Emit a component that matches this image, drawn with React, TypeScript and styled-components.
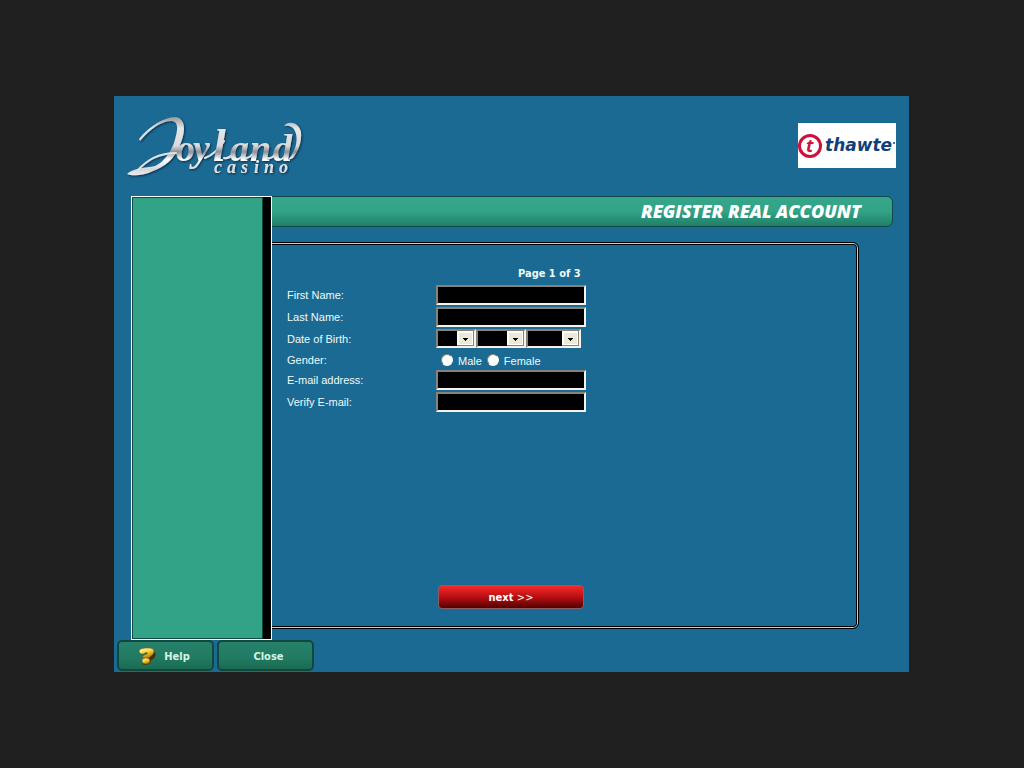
import React from "react";
import styled, { createGlobalStyle } from "styled-components";

const Global = createGlobalStyle`
  * { box-sizing: border-box; }
  body {
    margin: 0;
    background: #202020;
    color: #eefafa;
    font-family: "Liberation Sans", sans-serif;
    font-size: 11px;
    line-height: 14px;
  }
`;

const Page = styled.div`
  min-height: 100vh;
  padding: 96px 115px 96px 114px;
`;

const Frame = styled.main`
  display: flex;
  flex-direction: column;
  min-height: 576px;
  background: #1b6a94;
`;

const Header = styled.header`
  display: flex;
  justify-content: space-between;
  align-items: flex-start;
  height: 100px;
  padding: 16px 13px 0 10px;
`;

const Seal = styled.svg`
  margin-top: 11px;
  background: #fff;
`;

const Body = styled.div`
  display: flex;
  flex: 1;
  padding: 0 16px 0 17px;
`;

const Sidebar = styled.aside`
  position: relative;
  z-index: 1;
  display: flex;
  flex: 0 0 141px;
  border: 1px solid #fff;
  background: #000;
  padding-right: 8px;

  &::before {
    content: "";
    flex: 1;
    border: 1px solid #14493f;
    background: #32a387;
  }
`;

const Content = styled.section`
  display: flex;
  flex-direction: column;
  flex: 1;
  margin-left: -6px;
`;

const TitleBar = styled.h1`
  height: 31px;
  margin: 0 0 15px;
  padding-right: 31px;
  border: 1px solid #12484c;
  border-radius: 6px;
  background: linear-gradient(#35a689 0, #32a387 50%, #1f7f66 100%);
  color: #fff;
  font: italic 800 18px/29px "Open Sans", sans-serif;
  text-align: right;
`;

const Panel = styled.form`
  display: flex;
  flex-direction: column;
  flex: 1;
  margin: 0 34px 11px 0;
  padding: 24px 20px 19px;
  border: 1px solid #000;
  border-radius: 6px;
  box-shadow: inset 0 0 0 1px #a9dcec, inset 0 0 0 2px #000;
`;

const Step = styled.h2`
  margin: 0 0 3px 231px;
  font: bold 11px/14px "DejaVu Sans Condensed", "DejaVu Sans", sans-serif;
`;

const Row = styled.div<{ $tight?: boolean }>`
  display: grid;
  grid-template-columns: 149px 1fr;
  align-items: center;
  height: ${(p) => (p.$tight ? 19 : 22)}px;
`;

const bevel = `
  border: 2px solid;
  border-color: #85837c #f4f4ec #f4f4ec #85837c;
  border-radius: 0;
  outline: none;
  background: #000;
  color: #fff;
  font: inherit;
`;

const TextBox = styled.input`
  ${bevel}
  width: 150px;
  height: 20px;
  padding: 0 3px;
`;

const Group = styled.div`
  display: flex;
  align-items: center;
`;

const SelectBox = styled.span<{ $width: number }>`
  position: relative;
  width: ${(p) => p.$width}px;
  height: 19px;
  margin-bottom: 1px;
`;

const Select = styled.select`
  ${bevel}
  display: block;
  appearance: none;
  width: 100%;
  height: 100%;
`;

const Arrow = styled.svg`
  position: absolute;
  top: 2px;
  right: 2px;
  pointer-events: none;
`;

const Option = styled.label`
  display: flex;
  align-items: center;
  gap: 5px;
  margin-left: 5px;

  span {
    padding-top: 3px;
  }
`;

const Radio = styled.input`
  appearance: none;
  width: 12px;
  height: 12px;
  margin: 0;
  border: 1px solid;
  border-color: #85837c #f4f4ec #f4f4ec #85837c;
  border-radius: 50%;
  background: #fff;

  &:checked {
    background: radial-gradient(#000 2px, #fff 3px);
  }
`;

const Next = styled.button`
  width: 146px;
  height: 24px;
  margin: auto 0 0 151px;
  padding: 2px 0 0;
  border: 1px solid #8b5d6b;
  border-radius: 4px;
  background: linear-gradient(#f52a2a, #b90f12 50%, #540000);
  color: #fff;
  font: bold 11px/20px "DejaVu Sans Condensed", "DejaVu Sans", sans-serif;

  span {
    font-weight: normal;
  }
`;

const Footer = styled.footer`
  display: flex;
  gap: 3px;
  height: 32px;
  padding: 0 3px 1px;
`;

const FootButton = styled.button`
  display: flex;
  align-items: center;
  justify-content: center;
  gap: 8px;
  width: 97px;
  padding: 3px 3px 0 0;
  border: 2px solid #10483f;
  border-radius: 5px;
  background: linear-gradient(#27806a, #217a61 60%, #1b6b53);
  color: #d3f5e6;
  font: bold 11px/14px "DejaVu Sans Condensed", "DejaVu Sans", sans-serif;
`;

const CloseButton = styled(FootButton)`
  padding: 3px 0 0 6px;
`;

function JoylandLogo() {
  return (
    <svg width="184" height="72" viewBox="124 112 184 72" role="img" aria-label="Joyland Casino">
      <defs>
        <linearGradient id="steel" gradientUnits="userSpaceOnUse" x1="0" y1="116" x2="0" y2="178">
          <stop offset="0" stopColor="#8f9295" />
          <stop offset="0.2" stopColor="#e4e6e8" />
          <stop offset="0.48" stopColor="#d8dadc" />
          <stop offset="0.58" stopColor="#8e9194" />
          <stop offset="0.7" stopColor="#ffffff" />
          <stop offset="0.86" stopColor="#d4d7da" />
          <stop offset="1" stopColor="#f6f6f6" />
        </linearGradient>
        <filter id="drop" x="-10%" y="-10%" width="120%" height="130%">
          <feDropShadow dx="1" dy="1" stdDeviation="1" floodColor="#06243a" floodOpacity="0.9" />
        </filter>
      </defs>
      <g fill="url(#steel)" filter="url(#drop)">
        <path d="M139 139C150 125 165 117 176 117C187 119 185 134 180 145C175 158 165 167 153 171C143 176 132 176 127 174C133 168 146 168 155 166C164 162 170 153 174 143C178 130 179 122 172 121C161 121 150 129 140 141Z" />
        <path d="M137 171C147 160 158 153 177 153" fill="none" stroke="#dfe2e4" strokeWidth="2" />
        <path d="M284 126C288 120 299 122 301 132C302 142 298 152 293 158L288 160C295 152 298 142 296 134C294 126 289 125 284 126Z" />
        <path d="M205 158C213 155 219 149 224 141M224 158Q229 159 234 153M246 158Q250 158 254 152M268 158Q272 159 276 153" fill="none" stroke="#e4e6e8" strokeWidth="2" strokeLinecap="round" />
        <g fontFamily="Liberation Serif, serif" fontStyle="italic" fontWeight="bold" fontSize="38">
          <text x="176 193" y="161">oy</text>
          <text x="213" y="161" fontSize="46">l</text>
          <text x="230 250" y="161">an</text>
          <text x="273" y="161">d</text>
        </g>
        <text
          x="214 227 241 254 264 279"
          y="173"
          fontFamily="Liberation Serif, serif"
          fontStyle="italic"
          fontWeight="bold"
          fontSize="18"
        >
          casino
        </text>
      </g>
    </svg>
  );
}

function ThawteSeal() {
  return (
    <Seal width="98" height="45" viewBox="0 0 98 45" role="img" aria-label="thawte">
      <circle cx="12" cy="23" r="10.5" fill="#fff" stroke="#d0103c" strokeWidth="3" />
      <text x="8" y="29" fontFamily="Open Sans, sans-serif" fontSize="18" fontWeight="bold" fontStyle="italic" fill="#d0103c">t</text>
      <text x="27" y="28" fontFamily="DejaVu Sans, sans-serif" fontSize="17" fontWeight="bold" fontStyle="italic" fill="#123f78">thawte</text>
      <circle cx="96" cy="20" r="1" fill="#123f78" />
    </Seal>
  );
}

function HelpIcon() {
  return (
    <svg width="18" height="18" viewBox="0 0 18 18" aria-hidden="true">
      <defs>
        <linearGradient id="gold" x1="0" y1="0" x2="0.5" y2="1">
          <stop offset="0" stopColor="#fffbd0" />
          <stop offset="0.5" stopColor="#f9d640" />
          <stop offset="1" stopColor="#c08000" />
        </linearGradient>
      </defs>
      <path d="M4 16C8 18 14 16 13 12C18 10 18 6 17 4L12 9Z" fill="#4a2c08" />
      <g fill="url(#gold)" stroke="#7a4a04" strokeWidth="0.5">
        <path d="M1 3C2 0 7 0 11 0C16 0 17 3 15 6C14 8 12 8 11 10L5 10C4 8 6 7 9 6C10 5 9 4 7 5C5 7 1 6 1 3Z" />
        <ellipse cx="8" cy="13" rx="4" ry="3" />
      </g>
    </svg>
  );
}

function DateSelect({ label, width }: { label: string; width: number }) {
  return (
    <SelectBox $width={width}>
      <Select aria-label={label} />
      <Arrow width="17" height="15" viewBox="0 0 17 15" aria-hidden="true">
        <path d="M0 0H17V15H0Z" fill="#85837c" />
        <path d="M0 0H16V14H0Z" fill="#fffffa" />
        <path d="M2 2H15V13H2Z" fill="#ece9d8" />
        <path d="M6 7H11V8H10V9H9V10H8V9H7V8H6Z" fill="#000" />
      </Arrow>
    </SelectBox>
  );
}

function Field({ id, label, type = "text" }: { id: string; label: string; type?: string }) {
  return (
    <Row>
      <label htmlFor={id}>{label}</label>
      <TextBox id={id} type={type} />
    </Row>
  );
}

export default function App() {
  return (
    <Page>
      <Global />
      <Frame>
        <Header>
          <JoylandLogo />
          <ThawteSeal />
        </Header>
        <Body>
          <Sidebar />
          <Content>
            <TitleBar>REGISTER REAL ACCOUNT</TitleBar>
            <Panel onSubmit={(e) => e.preventDefault()}>
              <Step>Page 1 of 3</Step>
              <Field id="first" label="First Name:" />
              <Field id="last" label="Last Name:" />
              <Row>
                <span>Date of Birth:</span>
                <Group role="group" aria-label="Date of Birth">
                  <DateSelect label="Day" width={40} />
                  <DateSelect label="Month" width={50} />
                  <DateSelect label="Year" width={55} />
                </Group>
              </Row>
              <Row $tight>
                <span>Gender:</span>
                <Group role="radiogroup" aria-label="Gender">
                  <Option><Radio type="radio" name="gender" /><span>Male</span></Option>
                  <Option><Radio type="radio" name="gender" /><span>Female</span></Option>
                </Group>
              </Row>
              <Field id="email" label="E-mail address:" type="email" />
              <Field id="verify" label="Verify E-mail:" type="email" />
              <Next type="submit">next <span>&gt;&gt;</span></Next>
            </Panel>
          </Content>
        </Body>
        <Footer>
          <FootButton type="button"><HelpIcon />Help</FootButton>
          <CloseButton type="button">Close</CloseButton>
        </Footer>
      </Frame>
    </Page>
  );
}
